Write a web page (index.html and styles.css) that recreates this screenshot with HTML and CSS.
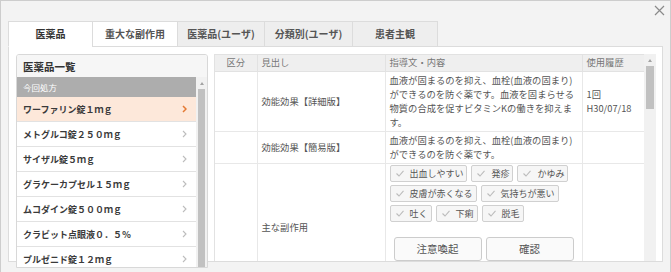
FILE: index.html
```html
<!DOCTYPE html>
<html lang="ja">
<head>
<meta charset="utf-8">
<title>医薬品</title>
<link rel="stylesheet" href="styles.css">
</head>
<body>
<div class="dialog">
  <button class="close" aria-label="閉じる"><svg width="11" height="11" viewBox="0 0 11 11"><path d="M1 1L10 10M10 1L1 10" stroke="#8a8a8a" stroke-width="1.2" fill="none"/></svg></button>
  <div class="tabs">
    <div class="tab active">医薬品</div>
    <div class="tab plain">重大な副作用</div>
    <div class="tab">医薬品(ユーザ)</div>
    <div class="tab">分類別(ユーザ)</div>
    <div class="tab">患者主観</div>
  </div>
  <div class="panel">
    <div class="drug-panel">
      <div class="drug-head">医薬品一覧</div>
      <div class="drug-body">
        <div class="drug-list">
          <div class="group">今回処方</div>
          <div class="item selected"><span>ワーファリン錠１ｍｇ</span><svg class="chev" width="5" height="8" viewBox="0 0 5 8"><path d="M1 1L4 4L1 7" fill="none"/></svg></div>
          <div class="item"><span>メトグルコ錠２５０ｍｇ</span><svg class="chev" width="5" height="8" viewBox="0 0 5 8"><path d="M1 1L4 4L1 7" fill="none"/></svg></div>
          <div class="item"><span>サイザル錠５ｍｇ</span><svg class="chev" width="5" height="8" viewBox="0 0 5 8"><path d="M1 1L4 4L1 7" fill="none"/></svg></div>
          <div class="item"><span>グラケーカプセル１５ｍｇ</span><svg class="chev" width="5" height="8" viewBox="0 0 5 8"><path d="M1 1L4 4L1 7" fill="none"/></svg></div>
          <div class="item"><span>ムコダイン錠５００ｍｇ</span><svg class="chev" width="5" height="8" viewBox="0 0 5 8"><path d="M1 1L4 4L1 7" fill="none"/></svg></div>
          <div class="item"><span>クラビット点眼液０．５％</span><svg class="chev" width="5" height="8" viewBox="0 0 5 8"><path d="M1 1L4 4L1 7" fill="none"/></svg></div>
          <div class="item"><span>プルゼニド錠１２ｍｇ</span><svg class="chev" width="5" height="8" viewBox="0 0 5 8"><path d="M1 1L4 4L1 7" fill="none"/></svg></div>
        </div>
        <div class="vscroll"><div class="arrow"></div><div class="thumb full"></div></div>
      </div>
    </div>
    <div class="detail">
      <div class="table-wrap">
        <table class="info">
          <colgroup><col class="c1"><col class="c2"><col class="c3"><col class="c4"></colgroup>
          <thead>
            <tr><th class="center">区分</th><th>見出し</th><th>指導文・内容</th><th>使用履歴</th></tr>
          </thead>
          <tbody>
            <tr>
              <td></td>
              <td class="mid">効能効果【詳細版】</td>
              <td class="text">血液が固まるのを抑え、血栓(血液の固まり)<br>ができるのを防ぐ薬です。血液を固まらせる<br>物質の合成を促すビタミンKの働きを抑えま<br>す。</td>
              <td class="mid">1回<br>H30/07/18</td>
            </tr>
            <tr>
              <td></td>
              <td class="mid">効能効果【簡易版】</td>
              <td class="text">血液が固まるのを抑え、血栓(血液の固まり)<br>ができるのを防ぐ薬です。</td>
              <td></td>
            </tr>
            <tr class="tall">
              <td></td>
              <td class="mid">主な副作用</td>
              <td class="top">
                <div class="tags">
                  <span class="tag"><svg class="check" width="8" height="7" viewBox="0 0 8 7"><path d="M0.5 3.5L3 6L7.5 0.8" fill="none"/></svg>出血しやすい</span>
                  <span class="tag"><svg class="check" width="8" height="7" viewBox="0 0 8 7"><path d="M0.5 3.5L3 6L7.5 0.8" fill="none"/></svg>発疹</span>
                  <span class="tag"><svg class="check" width="8" height="7" viewBox="0 0 8 7"><path d="M0.5 3.5L3 6L7.5 0.8" fill="none"/></svg>かゆみ</span>
                  <span class="tag"><svg class="check" width="8" height="7" viewBox="0 0 8 7"><path d="M0.5 3.5L3 6L7.5 0.8" fill="none"/></svg>皮膚が赤くなる</span>
                  <span class="tag"><svg class="check" width="8" height="7" viewBox="0 0 8 7"><path d="M0.5 3.5L3 6L7.5 0.8" fill="none"/></svg>気持ちが悪い</span>
                  <span class="tag"><svg class="check" width="8" height="7" viewBox="0 0 8 7"><path d="M0.5 3.5L3 6L7.5 0.8" fill="none"/></svg>吐く</span>
                  <span class="tag"><svg class="check" width="8" height="7" viewBox="0 0 8 7"><path d="M0.5 3.5L3 6L7.5 0.8" fill="none"/></svg>下痢</span>
                  <span class="tag"><svg class="check" width="8" height="7" viewBox="0 0 8 7"><path d="M0.5 3.5L3 6L7.5 0.8" fill="none"/></svg>脱毛</span>
                </div>
                <div class="actions">
                  <button class="btn">注意喚起</button>
                  <button class="btn">確認</button>
                </div>
              </td>
              <td></td>
            </tr>
          </tbody>
        </table>
      </div>
      <div class="vscroll wide"><div class="arrow"></div><div class="thumb short"></div></div>
    </div>
  </div>
</div>
</body>
</html>
```

FILE: styles.css
```css
* { box-sizing: border-box; }
html, body { margin: 0; padding: 0; }
body {
  width: 671px;
  height: 272px;
  overflow: hidden;
  background: #f3f3f3;
  font-family: "Noto Sans CJK JP", "Noto Sans", sans-serif;
  color: #444;
}
.dialog {
  position: relative;
  width: 671px;
  height: 272px;
  border: 1px solid #cdcdcd;
  border-bottom: none;
  background: #f3f3f3;
  padding: 20px 7px 0 7px;
}
.close {
  position: absolute;
  top: 4px;
  right: 5px;
  width: 11px;
  height: 11px;
  padding: 0;
  border: 0;
  background: none;
  display: flex;
}

/* tabs */
.tabs {
  display: flex;
  height: 26px;
  margin-bottom: -1px;
  position: relative;
  z-index: 1;
}
.tab {
  height: 26px;
  border: 1px solid #dcdcdc;
  background: #eeeeee;
  font-size: 10px;
  font-weight: bold;
  color: #555;
  line-height: 23px;
  text-align: center;
  margin-left: -1px;
}
.tab:nth-child(1) { width: 85px; margin-left: 0; }
.tab:nth-child(2) { width: 86px; }
.tab:nth-child(3) { width: 88px; }
.tab:nth-child(4) { width: 89px; }
.tab:nth-child(5) { width: 86px; }
.tab.plain { background: #fff; }
.tab.active {
  background: #fff;
  color: #333;
  border-bottom-color: #fff;
}

/* panel */
.panel {
  height: 216px;
  background: #fff;
  border: 1px solid #dcdcdc;
  padding: 7px 6px 0 7px;
  display: flex;
  gap: 6px;
}

/* drug list */
.drug-panel {
  width: 192px;
  height: 214px;
  flex-shrink: 0;
  border: 1px solid #d8d8d8;
  border-radius: 3px 3px 0 0;
  display: flex;
  flex-direction: column;
  overflow: hidden;
  position: relative;
}
.drug-head {
  height: 22px;
  flex-shrink: 0;
  background: #f6f6f6;
  padding-left: 6px;
  font-size: 10.5px;
  font-weight: bold;
  color: #333;
  line-height: 24px;
}
.drug-body {
  flex: 1;
  min-height: 0;
  display: flex;
}
.drug-list {
  width: 179px;
  overflow: hidden;
}
.group {
  height: 20px;
  background: #adadad;
  color: #fff;
  font-size: 8.5px;
  line-height: 20px;
  padding-left: 6px;
}
.item {
  height: 25px;
  border-bottom: 1px solid #e2e2e2;
  display: flex;
  align-items: center;
  justify-content: space-between;
  padding: 0 9px 0 6px;
  font-size: 9px;
  font-weight: bold;
  color: #3a3a3a;
  background: #fff;
}
.item.selected { background: #fde8da; }
.chev path { stroke: #bdbdbd; stroke-width: 1.1; }
.item.selected .chev path { stroke: #e47a34; stroke-width: 1.5; }

/* scrollbars */
.vscroll {
  width: 11px;
  flex-shrink: 0;
  background: #f1f1f1;
  display: flex;
  flex-direction: column;
}
.vscroll.wide { width: 12px; }
.arrow {
  height: 12px;
  flex-shrink: 0;
  display: flex;
  align-items: center;
  justify-content: center;
}
.arrow::before {
  content: "";
  border-left: 2.5px solid transparent;
  border-right: 2.5px solid transparent;
  border-bottom: 3px solid #a3a3a3;
}
.thumb {
  background: #c1c1c1;
  margin: 0 2px;
}
.thumb.full { flex: 1; }
.thumb.short { height: 43px; }

/* detail table */
.detail {
  flex: 1;
  min-width: 0;
  display: flex;
  height: 207px;
}
.table-wrap {
  flex: 1;
  min-width: 0;
  overflow: hidden;
  border-left: 1px solid #e2e2e2;
  border-top: 1px solid #e2e2e2;
}
.info {
  width: 429px;
  table-layout: fixed;
  border-collapse: collapse;
  font-size: 9.3px;
  color: #555;
}
.c1 { width: 42px; }
.c2 { width: 128px; }
.c3 { width: 197px; }
.c4 { width: 62px; }
.info th {
  height: 16px;
  background: #efefef;
  font-weight: normal;
  color: #777;
  text-align: left;
  padding: 0 4px;
  border-left: 1px solid #e2e2e2;
  border-bottom: 1px solid #e2e2e2;
  line-height: 15px;
}
.info th:first-child { border-left: none; }
.info th.center { text-align: center; }
.info td {
  border: 1px solid #e8e8e8;
  padding: 1px 4px 2px;
  line-height: 14px;
  vertical-align: middle;
}
.info td:first-child { border-left: none; }
.info td.text { vertical-align: top; }
.info td.top { vertical-align: top; padding: 1px 4px; }
.info tr.tall td { height: 128px; }

.tags {
  display: flex;
  flex-wrap: wrap;
  gap: 3px 4px;
  width: 189px;
}
.tag {
  display: inline-flex;
  align-items: center;
  height: 17px;
  border: 1px solid #d0d0d0;
  border-radius: 2px;
  background: #f6f6f6;
  padding: 0 3px 0 5px;
  font-size: 9px;
  color: #555;
  line-height: 15px;
}
.check { margin-right: 6px; }
.check path { stroke: #bcbcbc; stroke-width: 1.1; }

.actions {
  display: flex;
  gap: 4px;
  margin: 15px 0 0 4px;
}
.btn {
  width: 88px;
  height: 24px;
  border: 1px solid #cccccc;
  border-radius: 3px;
  background: #fafafa;
  font-family: inherit;
  font-size: 10.5px;
  color: #555;
  padding: 0;
}
```
